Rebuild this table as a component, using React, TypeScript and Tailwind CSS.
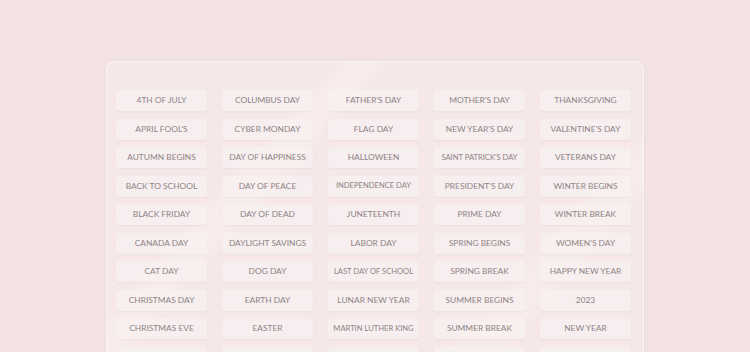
const holidays = [
  "4TH OF JULY", "COLUMBUS DAY", "FATHER'S DAY", "MOTHER'S DAY", "THANKSGIVING",
  "APRIL FOOL'S", "CYBER MONDAY", "FLAG DAY", "NEW YEAR'S DAY", "VALENTINE'S DAY",
  "AUTUMN BEGINS", "DAY OF HAPPINESS", "HALLOWEEN", "SAINT PATRICK'S DAY", "VETERANS DAY",
  "BACK TO SCHOOL", "DAY OF PEACE", "INDEPENDENCE DAY", "PRESIDENT'S DAY", "WINTER BEGINS",
  "BLACK FRIDAY", "DAY OF DEAD", "JUNETEENTH", "PRIME DAY", "WINTER BREAK",
  "CANADA DAY", "DAYLIGHT SAVINGS", "LABOR DAY", "SPRING BEGINS", "WOMEN'S DAY",
  "CAT DAY", "DOG DAY", "LAST DAY OF SCHOOL", "SPRING BREAK", "HAPPY NEW YEAR",
  "CHRISTMAS DAY", "EARTH DAY", "LUNAR NEW YEAR", "SUMMER BEGINS", "2023",
  "CHRISTMAS EVE", "EASTER", "MARTIN LUTHER KING", "SUMMER BREAK", "NEW YEAR",
];

const small = new Set(["SAINT PATRICK'S DAY", "INDEPENDENCE DAY", "LAST DAY OF SCHOOL", "MARTIN LUTHER KING"]);

function Tag({ label }: { label?: string }) {
  return (
    <div className="h-[21px] rounded-[3px] bg-[#f8f0f0]/80 shadow-[0_1px_2px_rgba(120,80,80,0.06)] flex items-center justify-center">
      {label && (
        <span className={small.has(label) ? "text-[7.6px]" : "text-[8.4px]"}>
          {label}
        </span>
      )}
    </div>
  );
}

export default function App() {
  return (
    <div
      className="h-[352px] overflow-hidden bg-[#f4e3e4] text-[#8e8485]"
      style={{ fontFamily: '"Lato", "Liberation Sans", sans-serif' }}
    >
      <div className="relative ml-[106px] mt-[61px] w-[538px] h-[330px] rounded-[8px] border border-white/60 bg-[#f6e7e8] shadow-[0_0_3px_rgba(150,100,100,0.12)] pt-[28px] pl-[9px]">
        <div className="pointer-events-none absolute inset-0 rounded-[8px] bg-[linear-gradient(132deg,transparent_165px,rgba(255,255,255,0.2)_180px,rgba(255,255,255,0.2)_200px,transparent_215px,transparent_440px,rgba(255,255,255,0.18)_455px,rgba(255,255,255,0.18)_480px,transparent_495px)]" />
        <div className="relative grid grid-cols-[repeat(5,91px)] gap-x-[15px] gap-y-[7.5px]">
          {holidays.map((h) => (
            <Tag key={h} label={h} />
          ))}
          {[0, 1, 2, 3, 4].map((i) => (
            <Tag key={"last" + i} />
          ))}
        </div>
      </div>
    </div>
  );
}
